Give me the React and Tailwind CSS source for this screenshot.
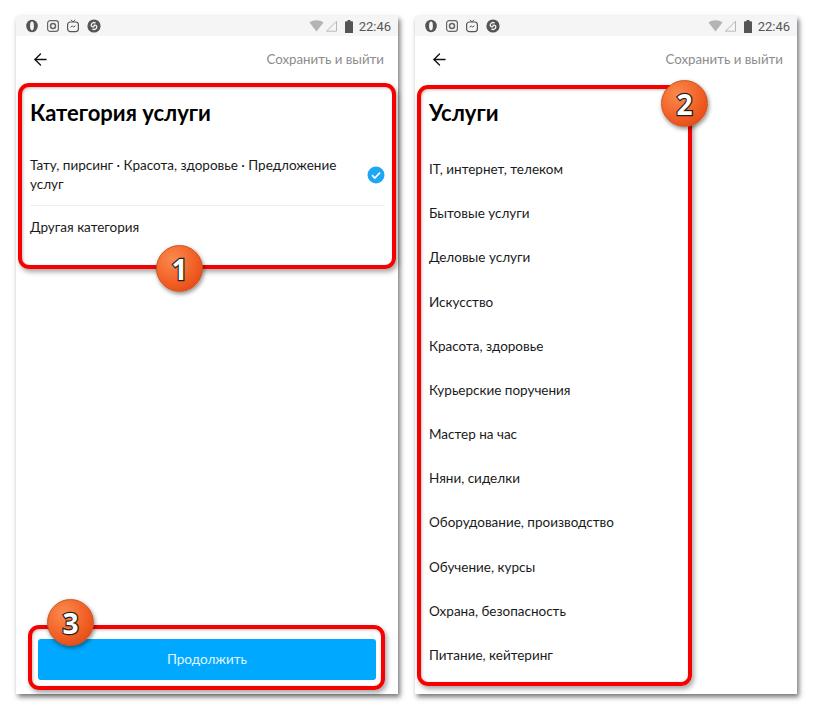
import { ArrowLeft } from "lucide-react";

const services = [
  "IT, интернет, телеком",
  "Бытовые услуги",
  "Деловые услуги",
  "Искусство",
  "Красота, здоровье",
  "Курьерские поручения",
  "Мастер на час",
  "Няни, сиделки",
  "Оборудование, производство",
  "Обучение, курсы",
  "Охрана, безопасность",
  "Питание, кейтеринг",
];

function AppIcons() {
  return (
    <div className="flex items-center gap-[6.5px]">
      <svg width="14" height="14" viewBox="0 0 14 14">
        <ellipse cx="7" cy="7" rx="5.8" ry="6.2" fill="#555" />
        <ellipse cx="7" cy="7" rx="1.9" ry="4.4" fill="#f5f5f5" />
      </svg>
      <svg width="14" height="14" viewBox="0 0 14 14" fill="none" stroke="#666" strokeWidth="1.2">
        <rect x="1.6" y="1.6" width="10.8" height="10.8" rx="2.6" />
        <circle cx="7" cy="7" r="2.5" strokeWidth="1.5" />
      </svg>
      <svg width="14" height="14" viewBox="0 0 14 14" fill="none" stroke="#555" strokeWidth="1.2">
        <rect x="1.6" y="3" width="10.8" height="9.6" rx="2.8" />
        <path d="M5 .8 7 3M9 .8 7 3" strokeWidth="1" />
        <path d="M4.6 8.2 6.2 7l1.6 1 1.6-1.2" strokeWidth="1" />
      </svg>
      <svg width="14" height="14" viewBox="0 0 14 14" fill="none">
        <circle cx="7" cy="7" r="6.6" fill="#555" />
        <path d="M8.2 3.8C6.4 3 4.2 4.2 4.2 6.2c0 1.6 1.6 2 2.8 1.4M5.8 10.2c1.8.8 4-.4 4-2.4 0-1.6-1.6-2-2.8-1.4" stroke="#f5f5f5" strokeWidth="1.3" strokeLinecap="round" />
      </svg>
    </div>
  );
}

function SystemIcons() {
  return (
    <div className="flex items-center text-[#555]">
      <svg width="15" height="12" viewBox="0 0 15 12" className="mr-[1px]">
        <path d="M0.5 2.5C4.5-.6 10.5-.6 14.5 2.5L7.5 11.5Z" fill="#b4b4b4" />
      </svg>
      <svg width="13" height="12" viewBox="0 0 13 12" className="mr-[7px]">
        <path d="M1.5 11.2 11.5 1.2V11.2Z" fill="none" stroke="#b8b8b8" strokeWidth="1" />
      </svg>
      <svg width="8" height="13" viewBox="0 0 8 13" className="mr-[6px]">
        <path d="M2.6 0h2.8v1.2H7a1 1 0 0 1 1 1V13H0V2.2a1 1 0 0 1 1-1h1.6Z" fill="#555" />
      </svg>
      <span className="text-[13px] leading-none text-[#555] font-['Roboto',sans-serif]">22:46</span>
    </div>
  );
}

function Header() {
  return (
    <>
      <div className="h-5 bg-[#f5f5f5] flex items-center justify-between pl-[9px] pr-[7px]">
        <AppIcons />
        <SystemIcons />
      </div>
      <div className="h-[47px] flex items-center justify-between pl-[15px] pr-[14px]">
        <ArrowLeft size={19} strokeWidth={1.7} color="#111" />
        <span className="text-[13.3px] text-[#8c8c8c] mt-[1px]">Сохранить и выйти</span>
      </div>
    </>
  );
}

function Frame({ className }) {
  return (
    <div
      className={
        "absolute border-[4px] border-[#f60000] rounded-[11px] shadow-[2px_3px_5px_rgba(0,0,0,0.35),inset_1px_1px_3px_rgba(0,0,0,0.25)] " +
        className
      }
    />
  );
}

function Badge({ n, className }) {
  return (
    <div
      className={
        "absolute size-[47px] rounded-full flex items-center justify-center bg-[radial-gradient(circle_at_35%_30%,#fb8a4e,#f15f24_55%,#dc3f10)] border border-[#c9531f] shadow-[1px_2px_4px_rgba(0,0,0,0.45)] " +
        className
      }
    >
      <span className="text-[28px] leading-none font-bold text-white [-webkit-text-stroke:2.5px_#222] [paint-order:stroke_fill] font-['Open_Sans',sans-serif]">
        {n}
      </span>
    </div>
  );
}

export default function App() {
  return (
    <div className="w-[813px] h-[710px] bg-white flex gap-[17px] pt-4 pl-4 font-['Lato','Noto_Sans',sans-serif] text-[#1a1a1a] overflow-hidden">
      {/* Left phone */}
      <div className="relative w-[382px] h-[678px] bg-white flex flex-col shadow-[2px_3px_5px_rgba(0,0,0,0.55)]">
        <Header />
        <div className="px-[14px] flex-1 flex flex-col">
          <h1 className="text-[22px] leading-[28px] font-bold text-black mt-[16px] mb-[18px]">Категория услуги</h1>
          <div className="flex items-center justify-between h-[61px] border-b border-[#eeeeee] mr-[-1px]">
            <div className="w-[320px] text-[13.5px] leading-[19px]">Тату, пирсинг · Красота, здоровье · Предложение услуг</div>
            <svg width="18" height="18" viewBox="0 0 18 18">
              <circle cx="9" cy="9" r="8.5" fill="#1ea7f5" />
              <path d="M5 9.2 7.8 12 13 6.6" fill="none" stroke="#fff" strokeWidth="1.7" />
            </svg>
          </div>
          <div className="h-[43px] flex items-center text-[13.5px]">Другая категория</div>
          <div className="flex-1" />
          <button className="w-[338px] h-[41px] ml-2 mb-[14px] bg-[#00a9ff] rounded-[3px] text-[13.5px] text-[#e2f5ff]">
            Продолжить
          </button>
        </div>
        <Frame className="left-[2px] top-[67px] w-[378px] h-[186px]" />
        <Frame className="left-[12px] top-[609px] w-[357px] h-[65px]" />
        <Badge n="1" className="left-[140px] top-[229px]" />
        <Badge n="3" className="left-[31px] top-[583px]" />
      </div>

      {/* Right phone */}
      <div className="relative w-[382px] h-[678px] bg-white flex flex-col shadow-[2px_3px_5px_rgba(0,0,0,0.55)]">
        <Header />
        <div className="px-[14px]">
          <h1 className="text-[22px] leading-[28px] font-bold text-black mt-[16px] mb-[20px]">Услуги</h1>
          {services.map((s) => (
            <div key={s} className="h-[44.2px] flex items-center text-[13.5px]">
              {s}
            </div>
          ))}
        </div>
        <Frame className="left-[2px] top-[69px] w-[275px] h-[601px]" />
        <Badge n="2" className="left-[246px] top-[64px]" />
      </div>
    </div>
  );
}
